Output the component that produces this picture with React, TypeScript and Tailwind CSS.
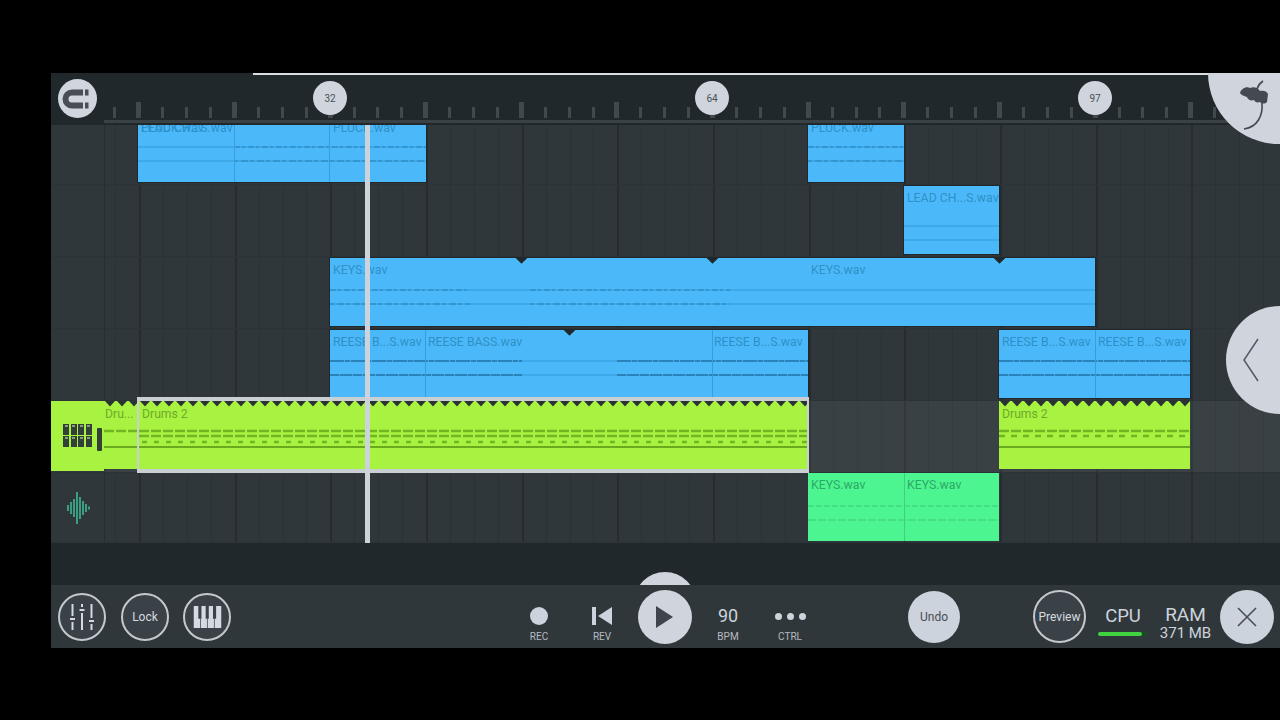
import type { ReactNode } from 'react';

const BEAT = 23.92;
const LANE_X = 104;
// bar lines fall on every 4th beat, first one at x=138 on screen
const beats = Array.from({ length: 49 }, (_, i) => 138 - LANE_X + (i - 1) * BEAT);

const FONT = "font-['Roboto','Liberation_Sans',sans-serif]";

interface Clip {
  left: number;
  width: number;
  top: number;
  height: number;
  labelTop?: number;
  labels: { x: number; text: string }[];
  dividers?: number[];
  notches?: number[];
  segments?: [number, number][];
}

const ROW1: Clip[] = [
  {
    left: 34, width: 288, top: 0, height: 57, labelTop: -3,
    labels: [{ x: 3, text: 'LEAD CH...S.wav' }, { x: 3, text: 'PLUCK.wav' }, { x: 195, text: 'PLUCK.wav' }],
    dividers: [96, 191], segments: [[96, 288]],
  },
  { left: 704, width: 96, top: 0, height: 57, labelTop: -3, labels: [{ x: 3, text: 'PLUCK.wav' }], segments: [[0, 96]] },
];
const ROW2: Clip[] = [{ left: 800, width: 95, top: 1, height: 68, labels: [{ x: 3, text: 'LEAD CH...S.wav' }], segments: [] }];
const ROW3: Clip[] = [
  { left: 226, width: 765, top: 1, height: 68, labels: [{ x: 3, text: 'KEYS.wav' }, { x: 481, text: 'KEYS.wav' }], notches: [191, 382, 669], segments: [[0, 140], [200, 400]] },
];
const ROW4: Clip[] = [
  {
    left: 226, width: 478, top: 1, height: 68,
    labels: [{ x: 3, text: 'REESE B...S.wav' }, { x: 98, text: 'REESE BASS.wav' }, { x: 384, text: 'REESE B...S.wav' }],
    dividers: [95, 382], notches: [239], segments: [[0, 192], [287, 478]],
  },
  { left: 895, width: 191, top: 1, height: 68, labels: [{ x: 3, text: 'REESE B...S.wav' }, { x: 99, text: 'REESE B...S.wav' }], dividers: [96], segments: [[0, 191]] },
];

function Waveform({ clip, y1, y2, heavy }: { clip: Clip; y1: number; y2: number; heavy?: boolean }) {
  const { width, segments = [[0, width]] } = clip;
  return (
    <svg className="absolute inset-0 pointer-events-none" width={width} height="100%">
      <line x1="0" x2={width} y1={y1} y2={y1} stroke="#3299d6" />
      <line x1="0" x2={width} y1={y2} y2={y2} stroke="#3299d6" />
      {segments.map(([a, b]) => (
        <g key={a} stroke="#2a83b9">
          <line x1={a} x2={b} y1={y1} y2={y1} strokeWidth={heavy ? 2.2 : 1.2} strokeDasharray={heavy ? '14 1 5 1' : '6 2 3 3'} />
          <line x1={a} x2={b} y1={y2} y2={y2} strokeWidth={heavy ? 1.8 : 1.2} strokeDasharray={heavy ? '9 1 12 1' : '4 3 7 2'} />
        </g>
      ))}
    </svg>
  );
}

function BlueClip({ clip, y1, y2, heavy }: { clip: Clip; y1: number; y2: number; heavy?: boolean }) {
  return (
    <div
      className="absolute bg-[#4bb9f9] overflow-hidden outline outline-1 outline-[#20282c]"
      style={{ left: clip.left, width: clip.width, top: clip.top, height: clip.height }}
    >
      <Waveform clip={clip} y1={y1} y2={y2} heavy={heavy} />
      {clip.dividers?.map(d => (
        <div key={d} className="absolute top-0 bottom-0 w-px bg-[#389dd8]" style={{ left: d }} />
      ))}
      {clip.notches?.map(n => (
        <div key={n} className="absolute -top-[5px] w-[9px] h-[9px] rotate-45 bg-[#20282c]" style={{ left: n - 4 }} />
      ))}
      {clip.labels.map((l, i) => (
        <span
          key={i}
          className="absolute text-[12.3px] leading-none whitespace-nowrap text-[#2f90c8]"
          style={{ left: l.x, top: clip.labelTop ?? 6 }}
        >
          {l.text}
        </span>
      ))}
    </div>
  );
}

function DrumClip({ left, width, label, selected, labelLeft = 3 }: { left: number; width: number; label: string; selected?: boolean; labelLeft?: number }) {
  const id = `zig-${left}`;
  return (
    <div className="absolute top-0 h-[68px] bg-[#a8f341] overflow-hidden" style={{ left, width }}>
      <svg className="absolute inset-0" width={width} height={68}>
        <defs>
          <pattern id={id} width="12" height="6" patternUnits="userSpaceOnUse">
            <polygon points="1,0 11,0 6,5.5" fill="#2a3331" />
          </pattern>
        </defs>
        <rect x="0" y="0" width={width} height="6" fill={`url(#${id})`} />
        <line x1="0" x2={width} y1="30" y2="30" stroke="#72b522" strokeWidth="2.4" strokeDasharray="10 2" />
        {width > 60 && <line x1="0" x2={width} y1="35" y2="35" stroke="#72b522" strokeWidth="2.4" strokeDasharray={selected ? '10 2' : '6 6'} />}
        {selected && <line x1="3" x2={width} y1="41" y2="41" stroke="#72b522" strokeWidth="2.4" strokeDasharray="5 7" />}
        <line x1="0" x2={width} y1="46" y2="46" stroke="#6aa91e" strokeWidth="1.8" />
      </svg>
      <span className="absolute top-[7px] text-[12.2px] leading-none whitespace-nowrap text-[#6fa92a]" style={{ left: labelLeft }}>{label}</span>
    </div>
  );
}

function Row({ h, light, header, children }: { h: string; light?: boolean; header?: ReactNode; children?: ReactNode }) {
  return (
    <div className={`flex ${h} border-b border-[#2c3337]`}>
      <div className="w-[53px] shrink-0 flex items-center justify-center">{header}</div>
      <div className={`relative flex-1 ${light ? 'bg-white/[0.05]' : ''}`}>{children}</div>
    </div>
  );
}

function OutlineButton({ children, className }: { children: ReactNode; className?: string }) {
  return (
    <div className={`w-12 h-12 rounded-full border-2 border-[#c3c9cf] bg-[#3b4247] flex items-center justify-center text-[#d4dae0] text-[12px] ${className ?? ''}`}>
      {children}
    </div>
  );
}

function Labelled({ label, children, className }: { label: string; children: ReactNode; className?: string }) {
  return (
    <div className={`w-10 mt-[12px] flex flex-col items-center ${className ?? ''}`}>
      <div className="h-[26px] flex items-center justify-center text-[#cdd3dc]">{children}</div>
      <span className="text-[10px] leading-none mt-[3px] text-[#b5bbc2]">{label}</span>
    </div>
  );
}

export default function App() {
  return (
    <div className={`w-[1280px] h-[720px] bg-black overflow-hidden pt-[73px] pl-[51px] ${FONT}`}>
      <div className="relative w-[1229px] h-[575px] bg-[#20282c] overflow-hidden flex flex-col">
        {/* Ruler */}
        <div className="relative h-[52px] shrink-0 bg-[#20282c]">
          <div className="absolute top-0 left-[202px] right-[20px] h-[2px] bg-[#d8dde2]" />
          <div className="absolute left-[7px] top-[6px] w-[39px] h-[39px] rounded-full bg-[#d0d5de] flex items-center justify-center">
            <svg width="32" height="32" viewBox="0 0 32 32" fill="none">
              <path d="M21 9.5H10a6.5 6.5 0 0 0 0 13h11" stroke="#484e54" strokeWidth="6" />
              <rect x="23" y="6.5" width="3.5" height="6" fill="#484e54" />
              <rect x="23" y="19.5" width="3.5" height="6" fill="#484e54" />
            </svg>
          </div>
          <div className="absolute left-[53px] right-0 bottom-[2px] h-[3px] bg-[#3b4246]" />
          <div className="absolute left-[52px] bottom-[7px] flex items-end">
            {Array.from({ length: 48 }, (_, i) => (
              <div key={i} className="w-[23.92px] flex justify-center">
                <div className={(i + 3) % 4 === 0 ? 'w-[5px] h-[16px] bg-[#42494d]' : 'w-[3px] h-[11px] bg-[#42494d]'} />
              </div>
            ))}
          </div>
          {[{ n: '32', x: 262 }, { n: '64', x: 644 }, { n: '97', x: 1027 }].map(m => (
            <div key={m.n} className="absolute top-[8px] w-[34px] h-[34px] rounded-full bg-[#cfd4dd] flex items-center justify-center text-[10px] text-[#4b5157]" style={{ left: m.x }}>
              {m.n}
            </div>
          ))}
        </div>

        {/* Tracks */}
        <div className="relative h-[418px] shrink-0 bg-[#30373b] overflow-hidden">
          <div className="absolute top-0 bottom-0 left-[53px] right-0 border-l border-[#262c30]">
            {beats.map((b, i) => (
              <div
                key={i}
                className={`absolute top-0 bottom-0 ${i % 4 === 1 ? 'w-[2px] bg-[#262c30]' : 'w-px bg-[#2b3236]'}`}
                style={{ left: b }}
              />
            ))}
          </div>
          <div className="relative flex flex-col">
            <Row h="h-[60px]">
              {ROW1.map(c => <BlueClip key={c.left} clip={c} y1={22} y2={36} />)}
            </Row>
            <Row h="h-[72px]">
              {ROW2.map(c => <BlueClip key={c.left} clip={c} y1={40} y2={54} />)}
            </Row>
            <Row h="h-[72px]">
              {ROW3.map(c => <BlueClip key={c.left} clip={c} y1={32} y2={46} />)}
            </Row>
            <Row h="h-[72px]">
              {ROW4.map(c => <BlueClip key={c.left} clip={c} y1={31} y2={45} heavy />)}
            </Row>
            <Row
              h="h-[72px]"
              light
              header={
                <div className="w-[53px] h-[70px] -mt-[2px] bg-[#a8f341] flex items-center pl-[12px] relative">
                  <div className="grid grid-cols-4 gap-[1.5px]">
                    {Array.from({ length: 8 }, (_, i) => (
                      <div key={i} className="w-[6px] h-[10.5px] bg-[#33403a] pt-[1px] flex justify-center">
                        <div className="w-[3px] h-[2px] bg-[#8aa078]" />
                      </div>
                    ))}
                  </div>
                  <div className="absolute right-[2px] top-[27px] w-[5px] h-[23px] rounded-[1px] bg-[#33403a]" />
                </div>
              }
            >
              <DrumClip left={0} width={34} label="Dru..." labelLeft={1} />
              <div className="absolute left-[33px] top-[-4px] w-[672px] h-[76px] border-x-2 border-y-4 border-[#c9cfd3] z-10 overflow-hidden">
                <DrumClip left={0} width={668} label="Drums 2" selected />
              </div>
              <DrumClip left={895} width={191} label="Drums 2" />
            </Row>
            <Row
              h="h-[70px]"
              header={
                <svg width="24" height="34" viewBox="0 0 24 34" stroke="#3fc9a3" strokeWidth="1.4">
                  <path d="M2 14v6M5 11v12M8 8v18M11 1v32M14 6v22M17 10v14M20 13v8M23 15.5v3" />
                </svg>
              }
            >
              <div className="absolute left-[704px] top-0 w-[191px] h-[68px] bg-[#4df590] overflow-hidden">
                <svg className="absolute inset-0" width="191" height="68">
                  <line x1="0" x2="191" y1="33" y2="33" stroke="#3fc97a" strokeDasharray="6 2" />
                  <line x1="0" x2="191" y1="47" y2="47" stroke="#3fc97a" strokeDasharray="8 2" />
                </svg>
                <div className="absolute left-[96px] top-0 bottom-0 w-px bg-[#3fd07f]" />
                <span className="absolute left-[3px] top-[6px] text-[12.3px] leading-none text-[#2ea868]">KEYS.wav</span>
                <span className="absolute left-[99px] top-[6px] text-[12.3px] leading-none text-[#2ea868]">KEYS.wav</span>
              </div>
            </Row>
          </div>
          {/* Playhead */}
          <div className="absolute left-[314px] top-0 bottom-0 w-[5px] bg-[#ccd3da] z-20" />
        </div>

        <div className="h-[42px] shrink-0 bg-[#20282c] relative overflow-hidden">
          <div className="absolute left-[583px] top-[29px] w-[62px] h-[62px] rounded-full bg-[#cfd4dd]" />
        </div>

        {/* Toolbar */}
        <div className="h-[63px] shrink-0 bg-[#30373b] flex items-center relative">
          <OutlineButton className="ml-[7px]">
            <svg width="30" height="30" viewBox="0 0 30 30" fill="#d4dae0">
              <rect x="4.5" y="2" width="2" height="12" /><rect x="3" y="16" width="5" height="2" /><rect x="4.5" y="20" width="2" height="8" />
              <rect x="14" y="2" width="2" height="3" /><rect x="12.5" y="7" width="5" height="2" /><rect x="14" y="11" width="2" height="17" />
              <rect x="23.5" y="2" width="2" height="14" /><rect x="22" y="18" width="5" height="2" /><rect x="23.5" y="22" width="2" height="6" />
            </svg>
          </OutlineButton>
          <OutlineButton className="ml-[15px]">Lock</OutlineButton>
          <OutlineButton className="ml-[14px]">
            <svg width="29" height="22" viewBox="0 0 30 24" fill="#d4dae0">
              <path d="M0 0h30v24H0z" />
              <path d="M5 0h3.4v14H5zM13 0h3.4v14H13zM21 0h3.4v14H21z" fill="#3b4247" />
              <path d="M7 14h.8v10H7zM14.4 14h.8v10h-.8zM22 14h.8v10H22z" fill="#3b4247" />
            </svg>
          </OutlineButton>

          <Labelled label="REC" className="ml-[288px]">
            <div className="w-[18px] h-[18px] rounded-full bg-[#cdd3dc]" />
          </Labelled>
          <Labelled label="REV" className="ml-[23px]">
            <svg width="20" height="18" viewBox="0 0 20 18" fill="#cdd3dc">
              <rect x="0" y="0" width="4" height="18" /><polygon points="20,0 20,18 6,9" />
            </svg>
          </Labelled>
          <div className="ml-[16px] w-[54px] h-[54px] rounded-full bg-[#cfd4dd] flex items-center justify-center">
            <svg width="20" height="22" viewBox="0 0 20 22" fill="#3e454b"><polygon points="1,0 18,11 1,22" /></svg>
          </div>
          <Labelled label="BPM" className="ml-[16px]">
            <span className="text-[18px] leading-none">90</span>
          </Labelled>
          <Labelled label="CTRL" className="ml-[22px]">
            <div className="flex gap-[5px]">
              <div className="w-[7px] h-[7px] rounded-full bg-[#cdd3dc]" />
              <div className="w-[7px] h-[7px] rounded-full bg-[#cdd3dc]" />
              <div className="w-[7px] h-[7px] rounded-full bg-[#cdd3dc]" />
            </div>
          </Labelled>

          <div className="ml-[98px] w-[52px] h-[52px] rounded-full bg-[#cdd3dc] flex items-center justify-center text-[12px] text-[#474d53]">Undo</div>
          <div className="ml-[73px] w-[53px] h-[53px] rounded-full border-2 border-[#c3c9cf] bg-[#3b4247] flex items-center justify-center text-[12px] text-[#d4dae0]">Preview</div>

          <div className="ml-[12px] mt-[10px] w-[50px] flex flex-col items-center">
            <span className="text-[18.5px] leading-none text-[#cdd3dc]">CPU</span>
            <div className="w-[50px] h-[4px] mt-[6px] bg-[#1d4a24] rounded-sm">
              <div className="w-[44px] h-full bg-[#3fd341] rounded-sm" />
            </div>
          </div>
          <div className="ml-[11px] mt-[12px] w-[53px] flex flex-col items-center">
            <span className="text-[19px] leading-none text-[#cdd3dc]">RAM</span>
            <span className="text-[15px] leading-none mt-[2px] text-[#cdd3dc] whitespace-nowrap">371 MB</span>
          </div>
          <div className="ml-[8px] w-[54px] h-[54px] rounded-full bg-[#cdd3dc] flex items-center justify-center">
            <svg width="22" height="22" viewBox="0 0 22 22" stroke="#474d53" strokeWidth="1.6"><path d="M2 2l18 18M20 2L2 20" /></svg>
          </div>
        </div>

        {/* FL fruit corner */}
        <div className="absolute right-0 top-0 w-[72px] h-[71px] rounded-bl-[72px] bg-[#cfd4dd] z-30">
          <svg width="72" height="71" viewBox="0 0 72 71" fill="none">
            <path d="M32 20c1-4 6-7 10-5 4-2 8 0 10 3 3-1 7 0 8 3l-1 8c-2 2-5 2-7 0-3 1-5 0-6-2-3 1-6 0-7-3-2-1-5-1-7-4z" fill="#434a50" />
            <path d="M55 8c-3 2-5 5-6 8M54 30c1 12-4 24-18 26" stroke="#434a50" strokeWidth="1.6" />
          </svg>
        </div>

        {/* Side tab */}
        <div className="absolute right-0 top-[233px] w-[54px] h-[108px] rounded-l-[54px] bg-[#cfd4dd] z-30 flex items-center pl-[17px]">
          <svg width="16" height="44" viewBox="0 0 16 44" fill="none" stroke="#525960" strokeWidth="1.5"><path d="M15 1L1 22l14 21" /></svg>
        </div>
      </div>
    </div>
  );
}
